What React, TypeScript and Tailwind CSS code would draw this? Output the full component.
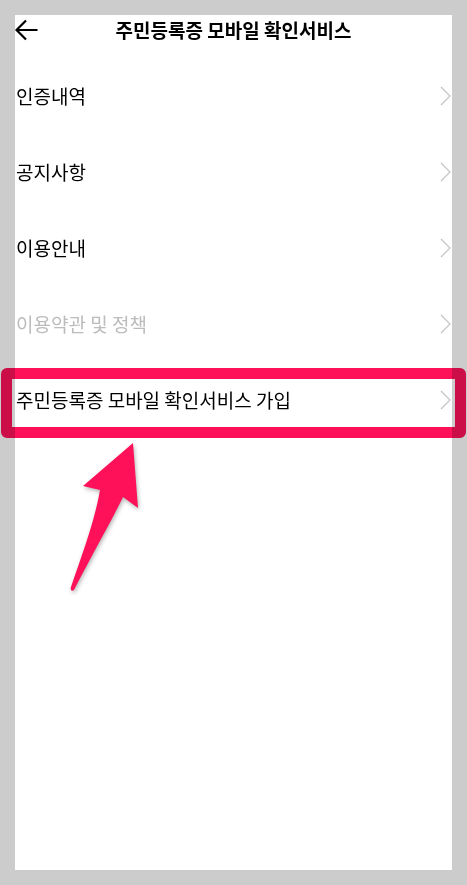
const items = [
  { label: "인증내역", muted: false },
  { label: "공지사항", muted: false },
  { label: "이용안내", muted: false },
  { label: "이용약관 및 정책", muted: true },
  { label: "주민등록증 모바일 확인서비스 가입", muted: false },
]

function Chevron() {
  return (
    <svg width="11" height="20" viewBox="0 0 11 20" fill="none">
      <polyline points="1,1 10,10 1,19" stroke="#c4c4c4" strokeWidth="1.2" />
    </svg>
  )
}

function BackArrow() {
  return (
    <svg width="24" height="22" viewBox="0 0 24 22" fill="none">
      <path d="M1.5,11 H22.5 M11,1.5 L1.5,11 L11,20.5" stroke="#000" strokeWidth="2.2" />
    </svg>
  )
}

export default function App() {
  return (
    <div
      className="relative w-[467px] h-[885px] bg-[#cccccc] pt-[15px] pl-[15px] overflow-hidden"
      style={{ fontFamily: '"Noto Sans CJK KR", "Noto Sans", sans-serif' }}
    >
      <div className="w-[437px] h-[855px] bg-white">
        {/* header */}
        <div className="grid grid-cols-[40px_1fr_40px] items-center h-[30px]">
          <BackArrow />
          <h1 className="text-center text-[19px] font-bold text-black">
            주민등록증 모바일 확인서비스
          </h1>
          <div />
        </div>

        {/* menu */}
        <ul className="mt-[13px]">
          {items.map((it) => (
            <li
              key={it.label}
              className="h-[76px] flex items-center justify-between pl-[1px] pr-[1px]"
            >
              <span
                className={
                  "text-[19px] " + (it.muted ? "text-[#bcbcbc]" : "text-black")
                }
              >
                {it.label}
              </span>
              <Chevron />
            </li>
          ))}
        </ul>
      </div>

      {/* highlight box */}
      <div className="absolute left-[1px] top-[368px] w-[465px] h-[70px] border-[11px] border-[#fe1158] rounded-[6px] mix-blend-multiply pointer-events-none" />

      {/* pointer arrow */}
      <svg
        className="absolute left-0 top-0 pointer-events-none drop-shadow-[1px_2px_2px_rgba(0,0,0,0.3)]"
        width="467"
        height="885"
        viewBox="0 0 467 885"
      >
        <path
          d="M133,443 L138,508 L123,497 C112,520 92,555 74,590 C72,592 70,590 71,587 C82,555 95,520 100,490 L83,486 Z"
          fill="#fe1158"
        />
      </svg>
    </div>
  )
}
